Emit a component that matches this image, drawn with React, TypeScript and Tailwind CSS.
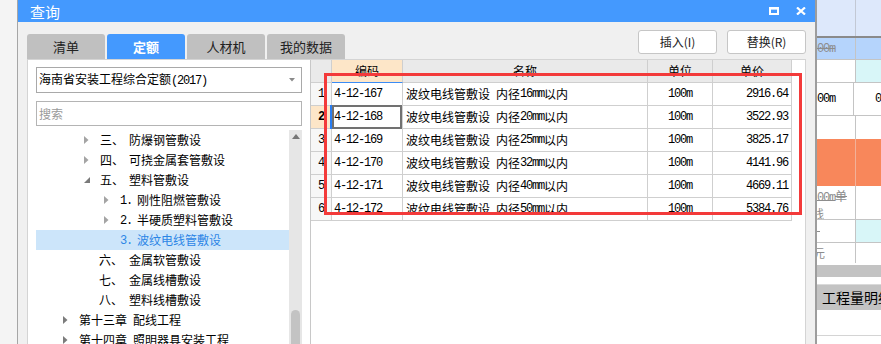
import React from "react";

const CJK = "[font-family:'Noto_Sans_CJK_SC',sans-serif]";
const MONO = "[font-family:'Liberation_Mono',monospace] text-[12px] tracking-[-1.2px]";

function Mixed({ text }: { text: string }) {
  const parts = text.split(/([\x20-\x7e]+)/).filter(Boolean);
  return (
    <>
      {parts.map((p, i) =>
        /^[\x20-\x7e]+$/.test(p) ? (
          <span key={i} className={`${MONO} whitespace-pre`}>
            {p}
          </span>
        ) : (
          <span key={i}>{p}</span>
        )
      )}
    </>
  );
}

type TreeRow = {
  pad: string;
  arrow?: "right" | "down";
  num: string;
  numW: string;
  label: string;
  selected?: boolean;
  dark?: boolean;
};

const tree: TreeRow[] = [
  { pad: "pl-[48px]", arrow: "right", num: "三、", numW: "w-[29px]", label: "防爆钢管敷设" },
  { pad: "pl-[48px]", arrow: "right", num: "四、", numW: "w-[29px]", label: "可挠金属套管敷设" },
  { pad: "pl-[48px]", arrow: "down", num: "五、", numW: "w-[29px]", label: "塑料管敷设" },
  { pad: "pl-[68px]", arrow: "right", num: "1.", numW: "w-[17px]", label: "刚性阻燃管敷设" },
  { pad: "pl-[68px]", arrow: "right", num: "2.", numW: "w-[17px]", label: "半硬质塑料管敷设" },
  { pad: "pl-[68px]", num: "3.", numW: "w-[17px]", label: "波纹电线管敷设", selected: true },
  { pad: "pl-[47px]", num: "六、", numW: "w-[30px]", label: "金属软管敷设" },
  { pad: "pl-[47px]", num: "七、", numW: "w-[30px]", label: "金属线槽敷设" },
  { pad: "pl-[47px]", num: "八、", numW: "w-[30px]", label: "塑料线槽敷设" },
  { pad: "pl-[27px]", arrow: "right", num: "第十三章", numW: "w-[54px]", label: "配线工程", dark: true },
  { pad: "pl-[27px]", arrow: "right", num: "第十四章", numW: "w-[54px]", label: "照明器具安装工程", dark: true },
];

const rows = [
  { code: "4-12-167", name: "波纹电线管敷设 内径16mm以内", price: "2916.64" },
  { code: "4-12-168", name: "波纹电线管敷设 内径20mm以内", price: "3522.93" },
  { code: "4-12-169", name: "波纹电线管敷设 内径25mm以内", price: "3825.17" },
  { code: "4-12-170", name: "波纹电线管敷设 内径32mm以内", price: "4141.96" },
  { code: "4-12-171", name: "波纹电线管敷设 内径40mm以内", price: "4669.11" },
  { code: "4-12-172", name: "波纹电线管敷设 内径50mm以内", price: "5384.76" },
];

function Arrow({ kind, dark }: { kind?: "right" | "down"; dark?: boolean }) {
  if (!kind) return <span className="w-[16px] shrink-0" />;
  return (
    <span className="flex w-[16px] shrink-0 items-center">
      {kind === "right" ? (
        <svg width="5" height="8" viewBox="0 0 5 8">
          <polygon points="0,0 4.5,4 0,8" fill={dark ? "#7c7c7c" : "#a4a4a4"} />
        </svg>
      ) : (
        <svg width="6" height="6" viewBox="0 0 6 6">
          <polygon points="6,0 6,6 0,6" fill="#7a7a7a" />
        </svg>
      )}
    </span>
  );
}

function TitleBar() {
  return (
    <div className="flex h-[22px] shrink-0 items-center bg-[#4499fe] pl-[12px] pr-[9px]">
      <span className="text-[15px] leading-none text-white">查询</span>
      <div className="ml-auto flex items-center gap-[17px]">
        <svg width="10" height="8" viewBox="0 0 10 8">
          <rect x="1" y="1.25" width="8" height="5.75" fill="none" stroke="#fff" strokeWidth="2" />
          <rect x="0" y="0" width="10" height="2.5" fill="#fff" />
        </svg>
        <svg width="10" height="8" viewBox="0 0 10 8">
          <path d="M1 0.5 L9 7.5 M9 0.5 L1 7.5" stroke="#fff" strokeWidth="2.2" />
        </svg>
      </div>
    </div>
  );
}

function Tabs() {
  const tabs = ["清单", "定额", "人材机", "我的数据"];
  return (
    <div className="mt-[12px] flex gap-[2px]">
      {tabs.map((t) => (
        <div
          key={t}
          className={`flex h-[25px] w-[78px] items-center justify-center rounded-t-[3px] text-[13px] ${
            t === "定额" ? "bg-[#4499fe] font-bold text-white" : "bg-[#c0c0c0] text-[#222]"
          }`}
        >
          {t}
        </div>
      ))}
    </div>
  );
}

function Buttons() {
  return (
    <div className="mt-[8px] flex gap-[10px]">
      {["插入(I)", "替换(R)"].map((b) => (
        <div
          key={b}
          className="flex h-[24px] w-[79px] items-center justify-center rounded-[3px] border border-[#c6c6c6] bg-white text-[12px] text-[#222]"
        >
          {b}
        </div>
      ))}
    </div>
  );
}

function LeftPanel() {
  return (
    <div className="flex w-[282px] shrink-0 flex-col pl-[8px] pt-[7px]">
      <div className="flex h-[26px] w-[266px] items-center border border-[#a9a9a9] pl-[2px] pr-[6px] text-[12px]">
        <span>
          海南省安装工程综合定额<span className={MONO}>(2017)</span>
        </span>
        <svg className="ml-auto" width="6" height="4" viewBox="0 0 6 4">
          <polygon points="0,0 6,0 3,3.5" fill="#8a8a8a" />
        </svg>
      </div>
      <div className="mt-[8px] flex h-[25px] w-[266px] items-center border border-[#b4b4b4] pl-[2px] text-[12px] text-[#9a9a9a]">
        搜索
      </div>
      <div className="mt-[4px] flex w-[266px] flex-1">
        <div className="w-[253px]">
          {tree.map((r) => (
            <div
              key={r.num + r.label}
              className={`flex h-[20px] items-center text-[12px] ${r.pad} ${
                r.selected ? "bg-[#cce5fa] text-[#2c86e6]" : "text-black"
              }`}
            >
              <Arrow kind={r.arrow} dark={r.dark} />
              <span className={`${r.numW} shrink-0`}>
                <Mixed text={r.num} />
              </span>
              <span className="whitespace-nowrap">{r.label}</span>
            </div>
          ))}
        </div>
        <div className="flex w-[13px] flex-col items-center bg-[#e6e6e6] pt-[4px]">
          <svg width="8" height="5" viewBox="0 0 8 5">
            <polygon points="0,5 8,5 4,0" fill="#777" />
          </svg>
          <div className="mt-auto h-[40px] w-[9px] rounded-t-full bg-[#c3c3c3]" />
        </div>
      </div>
    </div>
  );
}

function TablePanel() {
  const cell = "flex h-[23px] items-center border-r border-b border-[#cfcfcf]";
  return (
    <div className="flex-1 border-l border-[#c8c8c8]">
      <div className="grid w-[481px] grid-cols-[21px_71px_245px_65px_79px] text-[12px]">
        <div className={`${cell} bg-[#eaeaea]`} />
        <div className={`${cell} justify-center border-b-[#3b8cf5] bg-[#fde6c8]`}>编码</div>
        <div className={`${cell} justify-center bg-[#eaeaea]`}>名称</div>
        <div className={`${cell} justify-center bg-[#eaeaea]`}>单位</div>
        <div className={`${cell} justify-center bg-[#eaeaea]`}>单价</div>
        {rows.map((r, i) => {
          const sel = i === 1;
          return (
            <React.Fragment key={r.code}>
              <div
                className={`${cell} justify-center ${sel ? "bg-[#fde6c8] font-bold" : "bg-[#f7f7f7]"}`}
              >
                <span className={MONO}>{i + 1}</span>
              </div>
              <div className={`${cell} relative pl-[2px]`}>
                <span className={MONO}>{r.code}</span>
                {sel && (
                  <>
                    <div className="absolute -top-px right-0 -bottom-px left-0 border-2 border-[#717171]" />
                    <div className="absolute -top-px -bottom-px -left-[2px] w-[2px] bg-[#2a7ef2]" />
                  </>
                )}
              </div>
              <div className={`${cell} whitespace-nowrap pl-[3px]`}>
                <Mixed text={r.name} />
              </div>
              <div className={`${cell} justify-center`}>
                <span className={MONO}>100m</span>
              </div>
              <div className={`${cell} justify-end pr-[3px]`}>
                <span className={MONO}>{r.price}</span>
              </div>
            </React.Fragment>
          );
        })}
      </div>
    </div>
  );
}

function AppSide() {
  const strike = "text-[#8d8d8d] line-through";
  return (
    <div className="flex w-[66px] shrink-0 flex-col border-l-2 border-[#9d9d9d] bg-white text-[12px]">
      <div className="flex h-[36px] bg-[#dde8fb]">
        <div className="w-[39px] border-r border-[#c2c8d4]" />
      </div>
      <div className="h-[2px] bg-[#8a8a8a]" />
      <div className="flex h-[22px] border-b border-[#c4c4c4] bg-[#b5d4fc]">
        <div className={`flex w-[39px] items-center border-r border-[#c4c4c4] ${strike}`}>
          <span className={MONO}>00m</span>
        </div>
      </div>
      <div className="flex h-[23px] border-b border-[#c4c4c4]">
        <div className="w-[39px] border-r border-[#c4c4c4]" />
        <div className="flex-1 bg-[#d8f6f8]" />
      </div>
      <div className="flex h-[33px] border-b border-[#c4c4c4]">
        <div className="flex w-[39px] items-center border-r border-[#c4c4c4]">
          <span className={MONO}>00m</span>
        </div>
        <div className="flex flex-1 items-center pl-[21px]">
          <span className={MONO}>0</span>
        </div>
      </div>
      <div className="flex h-[23px]">
        <div className="w-[39px] border-r border-[#c4c4c4]" />
      </div>
      <div className="flex h-[47px] bg-[#f8875b]">
        <div className="w-[39px] border-r border-[#f2b199]" />
      </div>
      <div className="flex h-[34px] border-b border-[#c4c4c4]">
        <div className={`w-[39px] overflow-hidden border-r border-[#c4c4c4] pt-[2px] leading-[15px] text-[#8d8d8d]`}>
          <div className="line-through">
            <span className={MONO}>00m</span>单
          </div>
          <div className="-ml-[5px]">线</div>
        </div>
      </div>
      <div className="flex h-[23px] border-b border-[#c4c4c4]">
        <div className="flex w-[39px] items-center border-r border-[#c4c4c4] text-[#8d8d8d]">
          <span className="h-px w-[3px] bg-[#8d8d8d]" />
        </div>
        <div className="flex-1 bg-[#d8f6f8]" />
      </div>
      <div className="flex h-[20px]">
        <div className="flex w-[39px] items-center overflow-hidden border-r border-[#c4c4c4] text-[#8d8d8d]">
          <span className="-ml-[4px]">元</span>
        </div>
      </div>
      <div className="h-[2px]" />
      <div className="h-[12px] bg-[#c3c3c3]" />
      <div className="h-[8px] border-b border-[#dadada]" />
      <div className="flex h-[25px] items-center whitespace-nowrap bg-[#c3c3c3] pl-[5px] text-[14px] text-black">
        工程量明细
      </div>
      <div className="h-[26px] border-b border-[#d4d4d4]" />
    </div>
  );
}

export default function App() {
  return (
    <div className={`relative flex h-[344px] w-[881px] overflow-hidden bg-[#f4f4f4] text-black ${CJK}`}>
      <div className="w-[18px] shrink-0 border-r border-[#a6a6a6] bg-[#f4f4f4]" />
      <div className="flex w-[797px] shrink-0 flex-col bg-[#f0f0f0]">
        <TitleBar />
        <div className="flex h-[37px] shrink-0 items-start justify-between px-[9px]">
          <Tabs />
          <Buttons />
        </div>
        <div className="mx-[9px] flex flex-1 border-t border-r border-l border-[#d4d4d4] bg-white">
          <LeftPanel />
          <TablePanel />
        </div>
      </div>
      <AppSide />
      <div className="pointer-events-none absolute top-[73px] left-[324px] h-[142px] w-[478px] border-[3px] border-[#f33a3a]" />
    </div>
  );
}
